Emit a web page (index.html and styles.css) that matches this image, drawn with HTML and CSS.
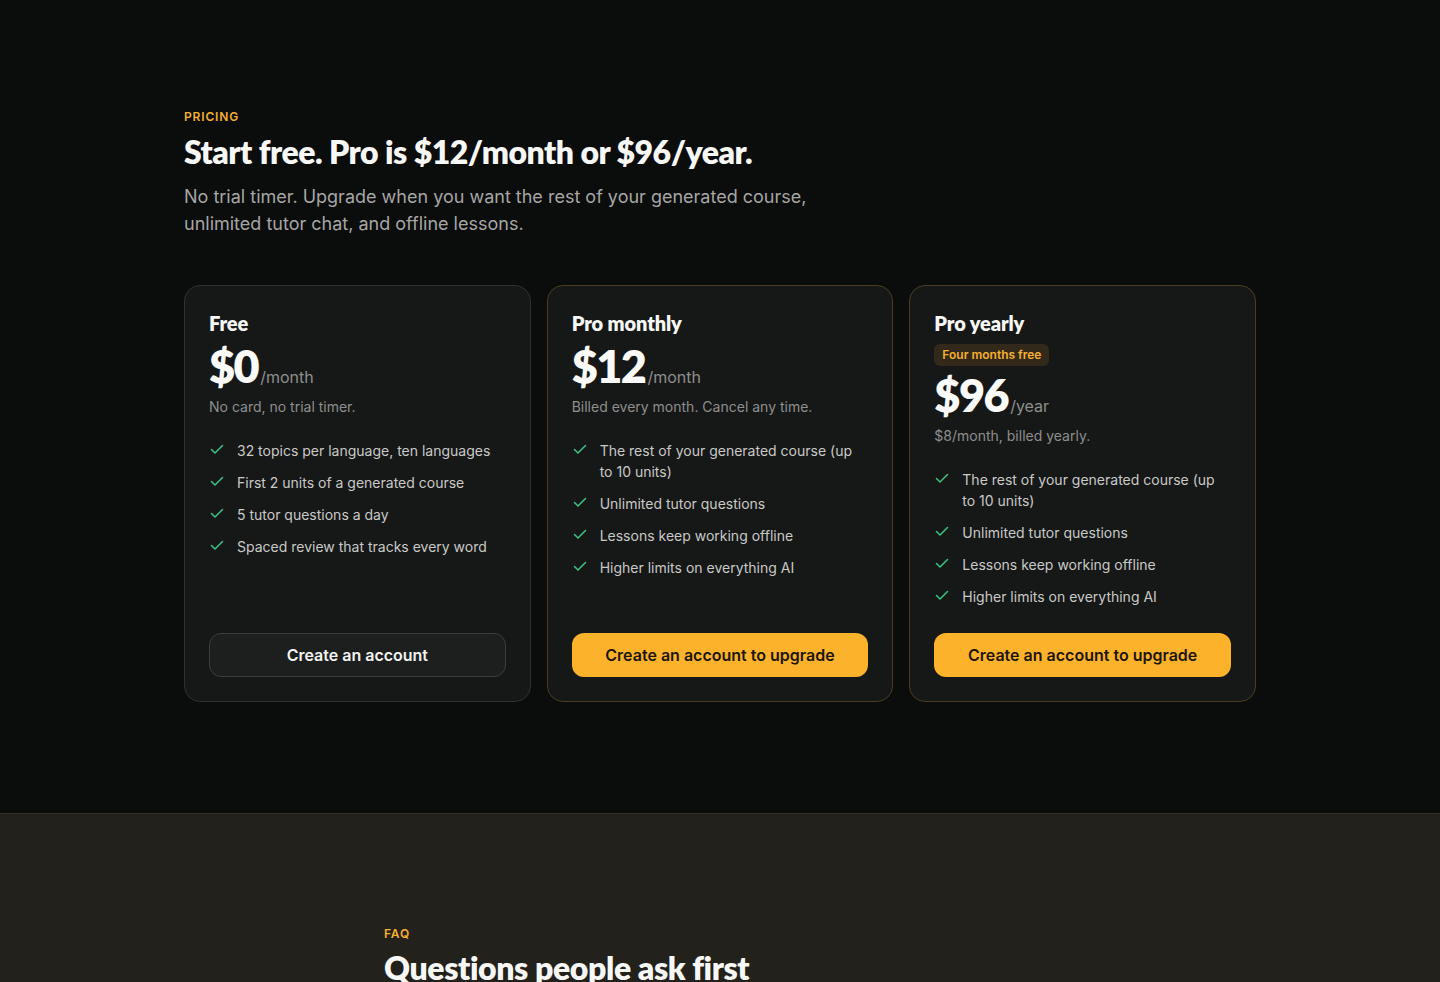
FILE: index.html
```html
<!DOCTYPE html>
<html lang="en">
<head>
<meta charset="utf-8">
<title>Pricing</title>
<link rel="stylesheet" href="styles.css">
</head>
<body>
<section class="pricing">
  <div class="wrap">
    <p class="eyebrow">PRICING</p>
    <h1 class="title">Start free. Pro is $12/month or $96/year.</h1>
    <p class="lede">No trial timer. Upgrade when you want the rest of your generated course, unlimited tutor chat, and offline lessons.</p>

    <div class="plans">
      <article class="plan">
        <h2 class="plan-name">Free</h2>
        <div class="price"><span class="amount">$0</span><span class="per">/month</span></div>
        <p class="note">No card, no trial timer.</p>
        <ul class="features">
          <li><svg class="check" viewBox="0 0 16 16"><path d="M2.5 8.5l3.5 3.5 7.5-7.5"/></svg><span>32 topics per language, ten languages</span></li>
          <li><svg class="check" viewBox="0 0 16 16"><path d="M2.5 8.5l3.5 3.5 7.5-7.5"/></svg><span>First 2 units of a generated course</span></li>
          <li><svg class="check" viewBox="0 0 16 16"><path d="M2.5 8.5l3.5 3.5 7.5-7.5"/></svg><span>5 tutor questions a day</span></li>
          <li><svg class="check" viewBox="0 0 16 16"><path d="M2.5 8.5l3.5 3.5 7.5-7.5"/></svg><span>Spaced review that tracks every word</span></li>
        </ul>
        <a class="btn btn-ghost" href="#">Create an account</a>
      </article>

      <article class="plan plan-pro">
        <h2 class="plan-name">Pro monthly</h2>
        <div class="price"><span class="amount">$12</span><span class="per">/month</span></div>
        <p class="note">Billed every month. Cancel any time.</p>
        <ul class="features">
          <li><svg class="check" viewBox="0 0 16 16"><path d="M2.5 8.5l3.5 3.5 7.5-7.5"/></svg><span>The rest of your generated course (up to 10 units)</span></li>
          <li><svg class="check" viewBox="0 0 16 16"><path d="M2.5 8.5l3.5 3.5 7.5-7.5"/></svg><span>Unlimited tutor questions</span></li>
          <li><svg class="check" viewBox="0 0 16 16"><path d="M2.5 8.5l3.5 3.5 7.5-7.5"/></svg><span>Lessons keep working offline</span></li>
          <li><svg class="check" viewBox="0 0 16 16"><path d="M2.5 8.5l3.5 3.5 7.5-7.5"/></svg><span>Higher limits on everything AI</span></li>
        </ul>
        <a class="btn btn-primary" href="#">Create an account to upgrade</a>
      </article>

      <article class="plan plan-pro">
        <h2 class="plan-name">Pro yearly</h2>
        <span class="badge">Four months free</span>
        <div class="price"><span class="amount">$96</span><span class="per">/year</span></div>
        <p class="note">$8/month, billed yearly.</p>
        <ul class="features">
          <li><svg class="check" viewBox="0 0 16 16"><path d="M2.5 8.5l3.5 3.5 7.5-7.5"/></svg><span>The rest of your generated course (up to 10 units)</span></li>
          <li><svg class="check" viewBox="0 0 16 16"><path d="M2.5 8.5l3.5 3.5 7.5-7.5"/></svg><span>Unlimited tutor questions</span></li>
          <li><svg class="check" viewBox="0 0 16 16"><path d="M2.5 8.5l3.5 3.5 7.5-7.5"/></svg><span>Lessons keep working offline</span></li>
          <li><svg class="check" viewBox="0 0 16 16"><path d="M2.5 8.5l3.5 3.5 7.5-7.5"/></svg><span>Higher limits on everything AI</span></li>
        </ul>
        <a class="btn btn-primary" href="#">Create an account to upgrade</a>
      </article>
    </div>
  </div>
</section>

<section class="faq">
  <div class="faq-wrap">
    <p class="eyebrow">FAQ</p>
    <h2 class="faq-title">Questions people ask first</h2>
    <div class="faq-list">
      <div class="faq-item">Do I need a card to start?</div>
      <div class="faq-item">What happens after the first 2 units?</div>
      <div class="faq-item">Can I cancel any time?</div>
    </div>
  </div>
</section>
</body>
</html>
```

FILE: styles.css
```css
* { box-sizing: border-box; }

html, body {
  margin: 0;
  padding: 0;
  background: #0b0c0c;
  color: #f2f2f0;
  font-family: Inter, "Liberation Sans", sans-serif;
}

.pricing {
  padding: 109px 0 111px;
  background: #0b0c0c;
}

.wrap {
  width: 1072px;
  margin: 0 auto;
}

.eyebrow {
  margin: 0;
  font-size: 12px;
  line-height: 16px;
  font-weight: 600;
  letter-spacing: 0.07em;
  color: #f5b02e;
}

.title {
  margin: 7px 0 0;
  font-family: Lato, Inter, sans-serif;
  font-weight: 800;
  font-size: 32px;
  line-height: 40px;
  letter-spacing: -0.5px;
  color: #f7f7f5;
}

.lede {
  margin: 11px 0 0;
  width: 640px;
  font-size: 18px;
  line-height: 27px;
  color: #a6a6a4;
}

.plans {
  margin-top: 48px;
  display: grid;
  grid-template-columns: repeat(3, 1fr);
  gap: 16px;
}

.plan {
  display: flex;
  flex-direction: column;
  align-items: flex-start;
  padding: 23px 24px 24px;
  background: #161818;
  border: 1px solid #2f3131;
  border-radius: 16px;
}

.plan-pro {
  border-color: #4a3e20;
}

.plan-name {
  margin: 0;
  font-family: Lato, Inter, sans-serif;
  font-weight: 800;
  font-size: 20px;
  line-height: 28px;
  letter-spacing: -0.1px;
  color: #f7f7f5;
}

.badge {
  margin-top: 7px;
  padding: 0 8px;
  height: 22px;
  line-height: 22px;
  font-size: 12px;
  font-weight: 600;
  color: #f5b02e;
  background: #33291a;
  border-radius: 6px;
}

.price {
  margin-top: 5px;
  display: flex;
  align-items: baseline;
  height: 48px;
}

.amount {
  font-family: Lato, Inter, sans-serif;
  font-weight: 800;
  font-size: 45px;
  line-height: 48px;
  letter-spacing: -1.5px;
  color: #fafaf8;
  padding-right: 2px;
}

.per {
  font-size: 16px;
  color: #8e8e8c;
}

.note {
  margin: 7px 0 0;
  font-size: 14px;
  line-height: 20px;
  color: #8e8e8c;
}

.features {
  list-style: none;
  margin: 23px 0 0;
  padding: 0;
  flex: 1;
  display: flex;
  flex-direction: column;
  gap: 11px;
}

.features li {
  display: flex;
  align-items: flex-start;
  gap: 12px;
  font-size: 14px;
  line-height: 21px;
  color: #c9c9c6;
}

.check {
  flex: none;
  width: 16px;
  height: 16px;
  margin-top: 1px;
  fill: none;
  stroke: #3cc483;
  stroke-width: 1.5;
  stroke-linecap: round;
  stroke-linejoin: round;
}

.btn {
  margin-top: 26px;
  align-self: stretch;
  display: flex;
  align-items: center;
  justify-content: center;
  height: 44px;
  border-radius: 12px;
  font-size: 16px;
  font-weight: 600;
  text-decoration: none;
}

.btn-ghost {
  background: #1c1f1e;
  border: 1px solid #3b3e3c;
  color: #f3f3f1;
}

.btn-primary {
  background: #fdb22b;
  color: #1b1608;
}

.faq {
  background: #22211c;
  border-top: 1px solid #2e2d27;
  padding: 112px 0 96px;
}

.faq-wrap {
  width: 672px;
  margin: 0 auto;
}

.faq-title {
  margin: 6px 0 0;
  font-family: Lato, Inter, sans-serif;
  font-weight: 800;
  font-size: 32px;
  line-height: 40px;
  letter-spacing: -0.4px;
  color: #f7f7f5;
}

.faq-list {
  margin-top: 32px;
}

.faq-item {
  padding: 20px 0;
  border-bottom: 1px solid #34332c;
  font-size: 16px;
  color: #e6e6e2;
}
```
